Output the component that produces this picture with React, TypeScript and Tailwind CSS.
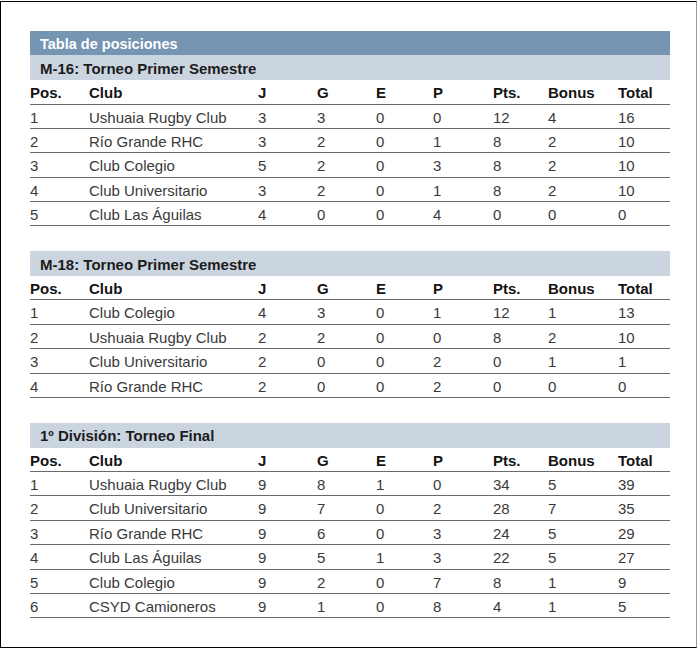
type Row = [string, string, string, string, string, string, string, string, string];

type Section = {
  title: string;
  rows: Array<Row>;
};

const SECTIONS: Array<Section> = [
  {
    title: "M-16: Torneo Primer Semestre",
    rows: [
      ["1", "Ushuaia Rugby Club", "3", "3", "0", "0", "12", "4", "16"],
      ["2", "Río Grande RHC", "3", "2", "0", "1", "8", "2", "10"],
      ["3", "Club Colegio", "5", "2", "0", "3", "8", "2", "10"],
      ["4", "Club Universitario", "3", "2", "0", "1", "8", "2", "10"],
      ["5", "Club Las Águilas", "4", "0", "0", "4", "0", "0", "0"],
    ],
  },
  {
    title: "M-18: Torneo Primer Semestre",
    rows: [
      ["1", "Club Colegio", "4", "3", "0", "1", "12", "1", "13"],
      ["2", "Ushuaia Rugby Club", "2", "2", "0", "0", "8", "2", "10"],
      ["3", "Club Universitario", "2", "0", "0", "2", "0", "1", "1"],
      ["4", "Río Grande RHC", "2", "0", "0", "2", "0", "0", "0"],
    ],
  },
  {
    title: "1º División: Torneo Final",
    rows: [
      ["1", "Ushuaia Rugby Club", "9", "8", "1", "0", "34", "5", "39"],
      ["2", "Club Universitario", "9", "7", "0", "2", "28", "7", "35"],
      ["3", "Río Grande RHC", "9", "6", "0", "3", "24", "5", "29"],
      ["4", "Club Las Águilas", "9", "5", "1", "3", "22", "5", "27"],
      ["5", "Club Colegio", "9", "2", "0", "7", "8", "1", "9"],
      ["6", "CSYD Camioneros", "9", "1", "0", "8", "4", "1", "5"],
    ],
  },
];

const HEADERS = ["Pos.", "Club", "J", "G", "E", "P", "Pts.", "Bonus", "Total"];

const GRID = "grid grid-cols-[59px_169px_59px_59px_57px_60px_55px_70px_1fr] items-center";

function StandingsTable({ section }: { section: Section }) {
  return (
    <div>
      <div className="flex h-[25px] items-center bg-[#cbd5e0] pl-[10px] pt-[3px] text-[15px] font-bold text-[#1c1c1c]">
        {section.title}
      </div>
      <div className={`${GRID} h-[24.5px] border-b border-[#6a6a6a] pt-[2px] text-[15px] font-bold text-[#141414]`}>
        {HEADERS.map((h) => (
          <span key={h}>{h}</span>
        ))}
      </div>
      {section.rows.map((row) => (
        <div
          key={row[0] + row[1]}
          className={`${GRID} h-[24.4px] border-b border-[#6a6a6a] pt-[2px] text-[15px] text-[#3a3a3a]`}
        >
          {row.map((cell, i) => (
            <span key={i} className="whitespace-nowrap">
              {cell}
            </span>
          ))}
        </div>
      ))}
    </div>
  );
}

export default function App() {
  return (
    <div className="h-[649px] w-[700px] bg-white pt-[1px] font-['Liberation_Sans',Arial,sans-serif]">
      <div className="h-[647px] w-[697px] border border-r-[#999] border-black pl-[29px] pr-[26px] pt-[29px]">
        <div className="flex h-[24px] items-center bg-[#7595b3] pl-[10px] pt-[3px] text-[14.5px] font-bold text-white">
          Tabla de posiciones
        </div>
        <div className="flex flex-col gap-[24.5px]">
          {SECTIONS.map((s) => (
            <StandingsTable key={s.title} section={s} />
          ))}
        </div>
      </div>
    </div>
  );
}
